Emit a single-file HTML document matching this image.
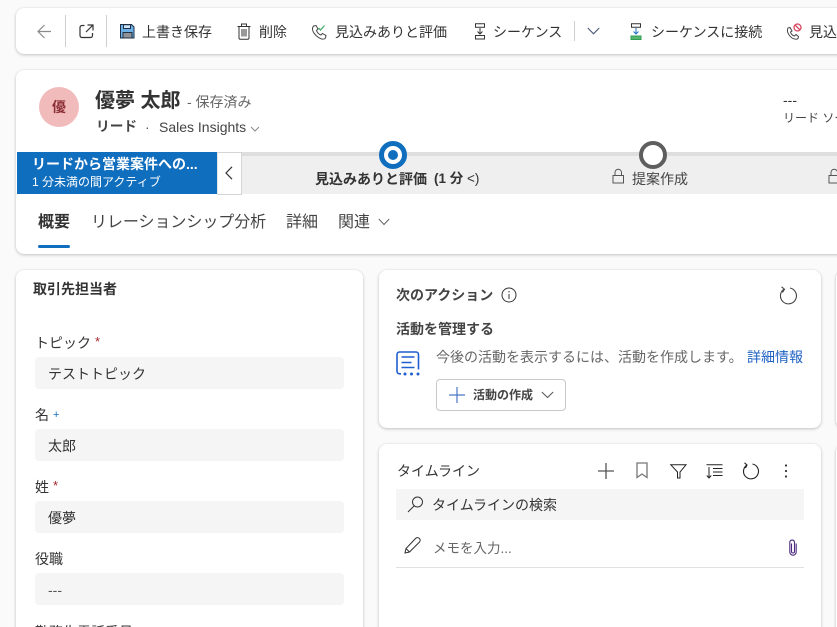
<!DOCTYPE html>
<html lang="ja"><head><meta charset="utf-8">
<style>
html,body{margin:0;padding:0;width:837px;height:627px;overflow:hidden;background:#fafafa}
body{position:relative;font-family:"Liberation Sans","Noto Sans CJK JP",sans-serif;color:#333;font-size:14px}
.a{position:absolute;white-space:nowrap;line-height:20px}
.card{position:absolute;background:#fff;box-shadow:0 1px 3px rgba(0,0,0,.22),0 0 1px rgba(0,0,0,.1)}
svg{position:absolute;overflow:visible;fill:none}
.field{position:absolute;left:35px;width:309px;height:32px;background:#f5f5f5;border-radius:4px;line-height:34px;text-indent:13px;font-size:14px;color:#333}
.lbl{position:absolute;left:35px;font-size:14px;line-height:20px;color:#333;white-space:nowrap}
.lbl i{font-style:normal;font-size:13px;color:#a4262c;position:relative;top:-2px;margin-left:4px}
.sep{position:absolute;width:1px;background:#cfcfcf}
</style></head><body>

<div class="card" style="left:16px;top:8px;width:840px;height:46px;border-radius:8px"></div>
<svg style="left:37px;top:24px" width="18" height="15" stroke="#8a8a8a" stroke-width="1.2"><path d="M1 7.500H14M7.500 1 1 7.500 7.500 14"/></svg>
<div class="sep" style="left:65px;top:15px;height:32px"></div>
<svg style="left:79px;top:24px" width="15" height="15" stroke="#333" stroke-width="1.2"><path d="M5.500 1.500H3A2 2 0 0 0 1 3.500V11.500A2 2 0 0 0 3 13.500H11.500A2 2 0 0 0 13.500 11.500V9M8.500 1H14V6.500M14 1 7 8"/></svg>
<div class="sep" style="left:106px;top:15px;height:32px"></div>
<svg style="left:120px;top:24px" width="15" height="15"><path d="M.5.5H11.500L14 3V14H.5Z" fill="#6cb0e6" stroke="#1f2f45"/><path d="M3.500 .8H10.500V4.500H3.500Z" fill="#cfe5f7" stroke="#1f2f45"/><path d="M3 14V8.500H12V14Z" fill="#8f9398" stroke="#1f2f45"/></svg>
<div class="a" style="left:142px;top:22px">上書き保存</div>
<svg style="left:237px;top:23px" width="14" height="17" stroke="#333"><path d="M.5 3.500H13.500M2 3.500V15A1.200 1.200 0 0 0 3.200 16.200H10.800A1.200 1.200 0 0 0 12 15V3.500M4.500 3V1H9.500V3M5 6V13.500M7 6V13.500M9 6V13.500"/></svg>
<div class="a" style="left:259px;top:22px">削除</div>
<svg style="left:311px;top:24px" width="17" height="16" stroke="#444"><path d="M2.500 2 5 1.500 7 5 5.500 6.500C6 8.500 8 10.500 10 11L11.500 9.500 15 11.500 14.500 14C13.500 15.500 11 15.500 8 13.800 4 11.500 1 7 1.500 4Z"/><path d="M7.500 4 9.500 6 13.500 1.500" stroke="#4caf6e" stroke-width="1.300"/></svg>
<div class="a" style="left:335px;top:22px">見込みありと評価</div>
<svg style="left:474px;top:23px" width="12" height="17" stroke="#333"><path d="M1.500 .8H10.500V4.300H1.500ZM1.500 12.500H10.500V16H1.500ZM6 5V11M3.500 8.500 6 11 8.500 8.500"/></svg>
<div class="a" style="left:493px;top:22px">シーケンス</div>
<div class="sep" style="left:574px;top:21px;height:20px"></div>
<svg style="left:587px;top:27px" width="13" height="8" stroke="#4a5a78" stroke-width="1.100"><path d="M.8 1 6.500 6.800 12.200 1"/></svg>
<svg style="left:630px;top:23px" width="12" height="17"><path d="M1.500 .8H10.500V4.300H1.500Z" stroke="#333"/><path d="M6 5V11M3.500 8.500 6 11 8.500 8.500" stroke="#1a6fbf"/><path d="M1 13H11V16.500H1Z" fill="#57b56f" stroke="#2f9c52"/></svg>
<div class="a" style="left:651px;top:22px">シーケンスに接続</div>
<svg style="left:786px;top:23px" width="17" height="17" stroke="#444"><path d="M2 5 4 4.500 6 8 4.500 9C5 11 6.500 12.500 8.500 13L10 11.500 12.500 13.500 12 15.500C11 16.500 8.500 16.500 6 15 3 13 1 9 1.500 6.500Z"/><circle cx="11.500" cy="4.500" r="3.500" stroke="#d9485f" stroke-width="1.300"/><path d="M9 2 14 7" stroke="#d9485f" stroke-width="1.300"/></svg>
<div class="a" style="left:809px;top:22px">見込</div>

<div class="card" style="left:16px;top:70px;width:840px;height:184px;border-radius:8px"></div>
<div class="a" style="left:39px;top:87px;width:40px;height:40px;border-radius:50%;background:#f1bbbc;text-align:center;line-height:40px;font-size:14px;font-weight:700;color:#8c2f35">優</div>
<div class="a" style="left:95px;top:89px;font-size:20px;font-weight:700;line-height:24px;color:#333">優夢 太郎</div>
<div class="a" style="left:187px;top:92px;font-size:14px;color:#666">- 保存済み</div>
<div class="a" style="left:96px;top:117px;font-weight:700;color:#444;font-size:13.700px">リード</div>
<div class="a" style="left:145px;top:117px;color:#555">·</div>
<div class="a" style="left:159px;top:117px;font-size:14px;color:#444">Sales Insights</div>
<svg style="left:250px;top:126px" width="10" height="6" stroke="#888"><path d="M1 1 5 5 9 1"/></svg>
<div class="a" style="left:783px;top:90px;font-size:14px;color:#333">---</div>
<div class="a" style="left:783px;top:108px;font-size:12px;color:#444">リード ソース</div>

<div class="a" style="left:17px;top:152px;width:200px;height:42px;background:#106ebe"></div>
<div class="a" style="left:32px;top:154px;font-size:14px;font-weight:700;color:#fff">リードから営業案件への...</div>
<div class="a" style="left:32px;top:172px;font-size:12px;color:#fff;line-height:20px">1 分未満の間アクティブ</div>
<div class="a" style="left:217px;top:152px;width:23px;height:41px;background:#fff;border:1px solid #d5d5d5;border-left:1px solid #e5e5e5"></div>
<svg style="left:224px;top:166px" width="10" height="14" stroke="#333" stroke-width="1.200"><path d="M8 .8 2 7 8 13.200"/></svg>
<div class="a" style="left:242px;top:152px;width:600px;height:42px;background:#efefef"></div>
<div class="a" style="left:242px;top:152px;width:600px;height:4px;background:#dedede"></div>
<div class="a" style="left:379px;top:141px;width:18px;height:18px;border:5px solid #106ebe;border-radius:50%;background:#fff"></div>
<div class="a" style="left:388px;top:150px;width:10px;height:10px;border-radius:50%;background:#106ebe"></div>
<div class="a" style="left:639px;top:141px;width:20px;height:20px;border:4px solid #5e5e5e;border-radius:50%;background:#fff"></div>
<div class="a" style="left:315px;top:169px;font-size:14px;font-weight:700;color:#333">見込みありと評価</div>
<div class="a" style="left:434px;top:169px;font-size:13.500px;color:#333"><b>(1 分</b> &lt;)</div>
<svg style="left:612px;top:169px" width="13" height="15" stroke="#555"><path d="M1 6.500H11.500V14H1ZM3 6.500V3.500A3.200 3.200 0 0 1 9.500 3.500V6.500"/></svg>
<div class="a" style="left:632px;top:169px;font-size:14px;color:#444">提案作成</div>
<svg style="left:828px;top:169px" width="13" height="15" stroke="#555"><path d="M1 6.500H11.500V14H1ZM3 6.500V3.500A3.200 3.200 0 0 1 9.500 3.500V6.500"/></svg>

<div class="a" style="left:38px;top:213px;font-size:16px;font-weight:700;color:#333">概要</div>
<div class="a" style="left:38px;top:245px;width:32px;height:3px;background:#106ebe;border-radius:2px"></div>
<div class="a" style="left:91px;top:213px;font-size:16px;color:#444;letter-spacing:-.05px">リレーションシップ分析</div>
<div class="a" style="left:286px;top:213px;font-size:16px;color:#444">詳細</div>
<div class="a" style="left:338px;top:213px;font-size:16px;color:#444">関連</div>
<svg style="left:378px;top:218px" width="12" height="8" stroke="#666"><path d="M.8 1 6 6.500 11.200 1"/></svg>

<div class="card" style="left:16px;top:270px;width:347px;height:380px;border-radius:8px"></div>
<div class="a" style="left:33px;top:279px;font-size:14px;font-weight:700;color:#333">取引先担当者</div>
<div class="lbl" style="top:333px">トピック<i>*</i></div>
<div class="field" style="top:357px">テストトピック</div>
<div class="lbl" style="top:405px">名<i style="color:#106ebe;font-size:11px">+</i></div>
<div class="field" style="top:429px">太郎</div>
<div class="lbl" style="top:477px">姓<i>*</i></div>
<div class="field" style="top:501px">優夢</div>
<div class="lbl" style="top:549px">役職</div>
<div class="field" style="top:573px;color:#555">---</div>
<div class="lbl" style="top:622px">勤務先電話番号</div>

<div class="card" style="left:379px;top:270px;width:442px;height:158px;border-radius:8px"></div>
<div class="a" style="left:396px;top:285px;font-size:14px;font-weight:700;color:#444">次のアクション</div>
<svg style="left:501px;top:287px" width="16" height="16" stroke="#333"><circle cx="8" cy="8" r="7"/><path d="M8 7V12M8 4V5.500"/></svg>
<svg style="left:779px;top:286px" width="18" height="18" stroke="#444" stroke-width="1.100"><path d="M5 3.200A8 8 0 1 0 11 2M2.500 .8 5.500 3.200 3.500 6.500"/></svg>
<div class="a" style="left:396px;top:319px;font-size:14px;font-weight:700;color:#444">活動を管理する</div>
<svg style="left:396px;top:351px" width="25" height="25" stroke="#1f5fd0" stroke-width="1.600"><path d="M5 22.800H3.500A2.500 2.500 0 0 1 1 20.300V3.500A2.500 2.500 0 0 1 3.500 1H20A2.500 2.500 0 0 1 22.500 3.500V18.500"/><path d="M5.500 6H18.500M5.500 11.500H15.500M5.500 16.500H18.500"/><circle cx="9" cy="23" r="1.500" fill="#1f5fd0" stroke="none"/><circle cx="15.500" cy="23" r="1.500" fill="#1f5fd0" stroke="none"/><circle cx="22" cy="23" r="1.500" fill="#1f5fd0" stroke="none"/></svg>
<div class="a" style="left:436px;top:347px;font-size:14px;color:#666">今後の活動を表示するには、活動を作成します。</div>
<div class="a" style="left:747px;top:347px;font-size:14px;color:#1f62c4">詳細情報</div>
<div class="a" style="left:436px;top:379px;width:128px;height:30px;border:1px solid #c8c8c8;border-radius:4px"></div>
<svg style="left:449px;top:387px" width="16" height="16" stroke="#4a76c8" stroke-width="1.200"><path d="M8 0V16M0 8H16"/></svg>
<div class="a" style="left:473px;top:385px;font-size:12px;font-weight:700;color:#444">活動の作成</div>
<svg style="left:541px;top:391px" width="13" height="8" stroke="#555"><path d="M.8 1 6.500 6.500 12.200 1"/></svg>

<div class="card" style="left:379px;top:444px;width:442px;height:210px;border-radius:8px"></div>
<div class="a" style="left:397px;top:461px;font-size:14px;color:#333">タイムライン</div>
<svg style="left:598px;top:463px" width="16" height="16" stroke="#555" stroke-width="1.300"><path d="M8 0V16M0 8H16"/></svg>
<svg style="left:636px;top:462px" width="12" height="17" stroke="#777" stroke-width="1.300"><path d="M1 1H11V15.500L6 12 1 15.500Z"/></svg>
<svg style="left:670px;top:464px" width="17" height="15" stroke="#222"><path d="M.8 .8H16L10 8V14H7.500V8Z"/></svg>
<svg style="left:706px;top:464px" width="17" height="15" stroke="#222"><path d="M.5 .8H16.500M7 4.500H16.500M7 8H16.500M7 11.500H16.500M3 3V14M.8 11.500 3 14 5.200 11.500"/></svg>
<svg style="left:742px;top:462px" width="17" height="17" stroke="#222" stroke-width="1.100"><path d="M5 3A7.500 7.500 0 1 0 10.500 2M2.500 .8 5 3 3.500 6"/></svg>
<svg style="left:784px;top:464px" width="4" height="14"><circle cx="2" cy="1.500" r="1.100" fill="#333"/><circle cx="2" cy="7" r="1.100" fill="#333"/><circle cx="2" cy="12.500" r="1.100" fill="#333"/></svg>
<div class="a" style="left:396px;top:489px;width:408px;height:31px;background:#f5f5f5"></div>
<svg style="left:407px;top:496px" width="17" height="17" stroke="#333"><circle cx="10.500" cy="6" r="5"/><path d="M7 10 1 16"/></svg>
<div class="a" style="left:432px;top:495px;font-size:14px;color:#333">タイムラインの検索</div>
<svg style="left:404px;top:537px" width="17" height="17" stroke="#333"><path d="M1 16 2 11.500 11.500 1.500A1.500 1.500 0 0 1 15.500 5L5.500 15ZM2 11.500 5.500 15"/></svg>
<div class="a" style="left:433px;top:539px;font-size:13.500px;color:#666">メモを入力...</div>
<svg style="left:789px;top:539px" width="8" height="17" stroke="#4b2a7f" stroke-width="1.100"><path d="M2.500 4.500V12.500A1.500 1.500 0 0 0 5.500 12.500V3A2.400 2.400 0 0 0 .8 3V13A3.200 3.200 0 0 0 7.200 13V4.500"/></svg>
<div class="a" style="left:396px;top:567px;width:408px;height:1px;background:#e1e1e1"></div>
<div class="card" style="left:836px;top:270px;width:20px;height:158px;border-radius:8px"></div>
<div class="card" style="left:836px;top:444px;width:20px;height:210px;border-radius:8px"></div>
</body></html>
